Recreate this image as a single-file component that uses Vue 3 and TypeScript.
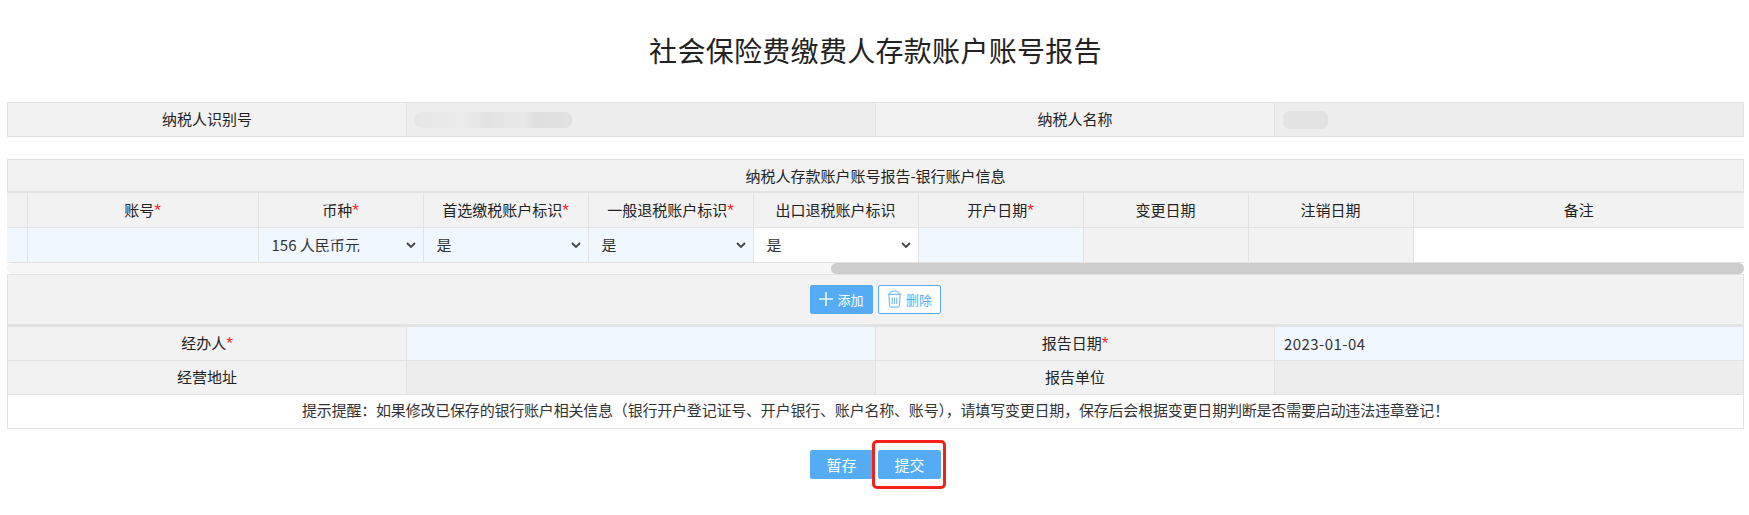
<script setup lang="ts">
const cols: { label: string; required: boolean }[] = [
  { label: '账号', required: true },
  { label: '币种', required: true },
  { label: '首选缴税账户标识', required: true },
  { label: '一般退税账户标识', required: true },
  { label: '出口退税账户标识', required: false },
  { label: '开户日期', required: true },
  { label: '变更日期', required: false },
  { label: '注销日期', required: false },
  { label: '备注', required: false }
];

const selects: { tint: string; options: string[] }[] = [
  { tint: 'must', options: ['156 人民币元'] },
  { tint: 'must', options: ['是', '否'] },
  { tint: 'must', options: ['是', '否'] },
  { tint: 'plain', options: ['是', '否'] }
];
</script>

<template>
  <div class="page">
    <h1 class="title">社会保险费缴费人存款账户账号报告</h1>

    <table class="grid info">
      <colgroup>
        <col class="c1" /><col class="c2" /><col class="c3" /><col class="c4" />
      </colgroup>
      <tbody>
        <tr>
          <th>纳税人识别号</th>
          <td class="readonly"><span class="smudge long"></span></td>
          <th>纳税人名称</th>
          <td class="readonly"><span class="smudge short"></span></td>
        </tr>
      </tbody>
    </table>

    <div class="bank">
      <div class="bank-title">纳税人存款账户账号报告-银行账户信息</div>
      <table class="grid accounts">
        <colgroup>
          <col class="a0" /><col class="a1" />
          <col v-for="n in 7" :key="n" class="an" />
          <col />
        </colgroup>
        <thead>
          <tr>
            <th></th>
            <th v-for="c in cols" :key="c.label">{{ c.label }}<i v-if="c.required">*</i></th>
          </tr>
        </thead>
        <tbody>
          <tr>
            <td class="must"></td>
            <td class="must"></td>
            <td v-for="(s, i) in selects" :key="i" :class="s.tint">
              <div class="pick-wrap">
                <select class="pick">
                  <option v-for="o in s.options" :key="o">{{ o }}</option>
                </select>
                <svg class="chevron" viewBox="0 0 10 6" width="10" height="6">
                  <path d="M1 1l4 4 4-4" fill="none" stroke="#444" stroke-width="1.8" />
                </svg>
              </div>
            </td>
            <td class="must"></td>
            <td class="gray"></td>
            <td class="gray"></td>
            <td class="plain"></td>
          </tr>
        </tbody>
      </table>
      <div class="scrollbar"><div class="thumb"></div></div>
      <div class="ops">
        <button class="btn solid small" type="button">
          <svg viewBox="0 0 14 14" width="14" height="14">
            <path d="M7 0v14M0 7h14" fill="none" stroke="#eaf4fd" stroke-width="1.7" />
          </svg>
          添加
        </button>
        <button class="btn ghost small" type="button">
          <svg viewBox="0 0 15 18" width="15" height="18">
            <path d="M.6 4.400h13.800M2.400 4.200C3 2 5 1 7.500 1s4.500 1 5.100 3.200M1.900 4.600l.7 10.900c.1 1 .7 1.600 1.600 1.600h6.600c.9 0 1.500-.6 1.600-1.600l.7-10.900M5.200 7.500v6.500M7.500 7.500v6.500M9.800 7.500v6.500" fill="none" stroke="#7cbdf5" stroke-width="1.200" />
          </svg>
          删除
        </button>
      </div>
    </div>

    <table class="grid footer">
      <colgroup>
        <col class="c1" /><col class="c2" /><col class="c3" /><col class="c4" />
      </colgroup>
      <tbody>
        <tr>
          <th>经办人<i>*</i></th>
          <td class="must"></td>
          <th>报告日期<i>*</i></th>
          <td class="must value">2023-01-04</td>
        </tr>
        <tr>
          <th>经营地址</th>
          <td class="readonly"></td>
          <th>报告单位</th>
          <td class="readonly"></td>
        </tr>
        <tr>
          <td class="hint" colspan="4">提示提醒：如果修改已保存的银行账户相关信息（银行开户登记证号、开户银行、账户名称、账号），请填写变更日期，保存后会根据变更日期判断是否需要启动违法违章登记！</td>
        </tr>
      </tbody>
    </table>

    <div class="actions">
      <button class="btn solid" type="button">暂存</button>
      <span class="marked">
        <button class="btn solid" type="button">提交</button>
      </span>
    </div>
  </div>
</template>

<style>
html, body {
  margin: 0;
  background: #fff;
}
</style>

<style scoped>
.page {
  width: 1737px;
  min-height: 515px;
  margin-left: 7px;
  font-family: "Noto Sans CJK SC", "Noto Sans", sans-serif;
  font-size: 15px;
  color: #333;
}

.title {
  margin: 0;
  height: 102px;
  line-height: 100px;
  text-align: center;
  font-size: 28px;
  letter-spacing: .3px;
  font-weight: 400;
  color: #222;
}

.grid {
  width: 100%;
  table-layout: fixed;
  border-collapse: collapse;
}

.grid th,
.grid td {
  height: 34px;
  padding: 0;
  box-sizing: border-box;
  border: 1px solid #e2e2e2;
  line-height: 1;
}

.grid th {
  background: #f2f2f2;
  font-weight: 400;
  color: #222;
  text-align: center;
}

.info th,
.footer th {
  padding-bottom: 2px;
}

.grid i {
  font-family: "Liberation Sans", sans-serif;
  font-size: 17px;
  line-height: 0;
  font-style: normal;
  color: #f5222d;
}

.c1 { width: 399px; }
.c2 { width: 469px; }
.c3 { width: 399px; }

.a0 { width: 20px; }
.a1 { width: 231px; }
.an { width: 165px; }

.must { background: #f0f7ff; }
.plain { background: #fff; }
.gray { background: #f2f2f2; }
.readonly { background: #ededed; }

.grid .value {
  padding-left: 9px;
  letter-spacing: .45px;
}

.smudge {
  display: block;
  height: 16px;
  margin-left: 7px;
  border-radius: 7px;
  background: linear-gradient(90deg, #e6e6e6 0%, #ebebeb 30%, #e2e2e2 45%, #e8e8e8 70%, #dfdfdf 76%, #e2e2e2 100%);
}

.smudge.long { width: 158px; }

.smudge.short {
  width: 45px;
  height: 18px;
  margin-left: 8px;
  background: #e3e3e3;
}

.info { margin-bottom: 22px; }

.bank-title {
  height: 31px;
  line-height: 31px;
  text-align: center;
  color: #222;
  background: #f2f2f2;
  border: 1px solid #e2e2e2;
  border-bottom-width: 2px;
}

.accounts th,
.accounts td {
  border-top: 0;
}

.accounts tr th:first-child,
.accounts tr td:first-child {
  border-left: 0;
}

.accounts tr th:last-child,
.accounts tr td:last-child {
  border-right: 0;
}

.pick-wrap {
  position: relative;
  height: 34px;
}

.pick {
  display: block;
  width: 100%;
  height: 34px;
  padding: 0 0 0 13px;
  border: 0;
  outline: 0;
  appearance: none;
  background: transparent;
  font: inherit;
  color: #333;
}

.chevron {
  position: absolute;
  top: 14px;
  right: 7px;
  pointer-events: none;
}

.scrollbar {
  display: flex;
  justify-content: flex-end;
  height: 11px;
  border-radius: 6px;
  background: #f6f6f6;
}

.thumb {
  width: 913px;
  border-radius: 6px;
  background: #cdcdcd;
}

.ops {
  display: flex;
  justify-content: center;
  gap: 5px;
  height: 52px;
  box-sizing: border-box;
  padding-top: 10px;
  background: #f2f2f2;
  border: 1px solid #e2e2e2;
  border-bottom-width: 2px;
}

.btn {
  display: inline-flex;
  align-items: center;
  justify-content: center;
  box-sizing: border-box;
  width: 63px;
  height: 29px;
  padding: 0;
  border-radius: 2px;
  font: inherit;
}

.btn.small {
  font-size: 13px;
  gap: 4px;
}

.solid {
  border: 1px solid #55acf5;
  background: #55acf5;
  color: #fff;
}

.ghost {
  border: 1px solid #55acf5;
  background: #fff;
  color: #55acf5;
}

.grid .hint {
  padding-bottom: 3px;
  background: #fff;
  text-align: center;
  letter-spacing: -.2px;
  color: #333;
}

.actions {
  display: flex;
  justify-content: center;
  gap: 5px;
  margin-top: 21px;
}

.marked {
  position: relative;
  display: inline-flex;
}

.marked::after {
  content: "";
  position: absolute;
  inset: -10px -5px -10px -6px;
  border: 3px solid #f5201a;
  border-radius: 5px;
}
</style>
